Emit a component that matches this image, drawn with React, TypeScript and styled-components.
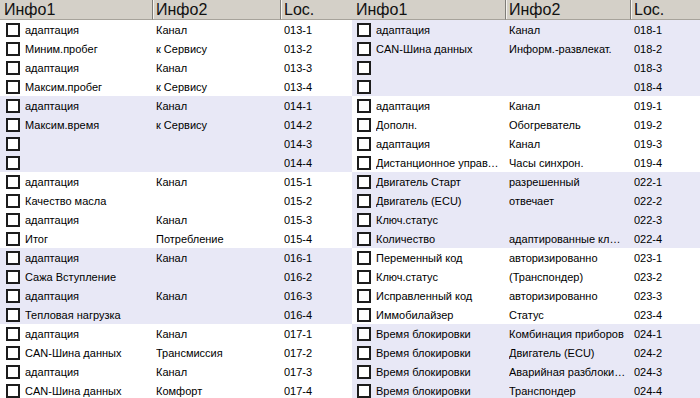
import React from 'react';
import styled, { createGlobalStyle } from 'styled-components';

const Global = createGlobalStyle`
  html, body { margin: 0; padding: 0; background: #fff; }
  body { font-family: "Liberation Sans", Arial, sans-serif; }
`;

type Row = { info1: string; info2: string; loc: string };

const group = (code: string, items: [string, string][]): Row[] =>
  items.map(([info1, info2], i) => ({ info1, info2, loc: `${code}-${i + 1}` }));

const LEFT: Row[][] = [
  group('013', [['адаптация', 'Канал'], ['Миним.пробег', 'к Сервису'], ['адаптация', 'Канал'], ['Максим.пробег', 'к Сервису']]),
  group('014', [['адаптация', 'Канал'], ['Максим.время', 'к Сервису'], ['', ''], ['', '']]),
  group('015', [['адаптация', 'Канал'], ['Качество масла', ''], ['адаптация', 'Канал'], ['Итог', 'Потребление']]),
  group('016', [['адаптация', 'Канал'], ['Сажа Вступление', ''], ['адаптация', 'Канал'], ['Тепловая нагрузка', '']]),
  group('017', [['адаптация', 'Канал'], ['CAN-Шина данных', 'Трансмиссия'], ['адаптация', 'Канал'], ['CAN-Шина данных', 'Комфорт']]),
];

const RIGHT: Row[][] = [
  group('018', [['адаптация', 'Канал'], ['CAN-Шина данных', 'Информ.-развлекат.'], ['', ''], ['', '']]),
  group('019', [['адаптация', 'Канал'], ['Дополн.', 'Обогреватель'], ['адаптация', 'Канал'], ['Дистанционное управление', 'Часы синхрон.']]),
  group('022', [['Двигатель Старт', 'разрешенный'], ['Двигатель (ECU)', 'отвечает'], ['Ключ.статус', ''], ['Количество', 'адаптированные ключи']]),
  group('023', [['Переменный код', 'авторизированно'], ['Ключ.статус', '(Транспондер)'], ['Исправленный код', 'авторизированно'], ['Иммобилайзер', 'Статус']]),
  group('024', [['Время блокировки', 'Комбинация приборов'], ['Время блокировки', 'Двигатель (ECU)'], ['Время блокировки', 'Аварийная разблокировка'], ['Время блокировки', 'Транспондер']]),
];

const Page = styled.div`
  display: flex;
  width: 700px;
  height: 398px;
  overflow: hidden;
`;

const Table = styled.div<{ $cols: string; $width: number }>`
  display: grid;
  grid-template-columns: ${({ $cols }) => $cols};
  grid-auto-rows: 19px;
  grid-template-rows: 20px;
  width: ${({ $width }) => $width}px;
  flex: none;
`;

const HeadCell = styled.div<{ $first?: boolean }>`
  background: #d4d0c8;
  border-bottom: 1px solid #a7a39b;
  border-left: ${({ $first }) => ($first ? 'none' : '1px solid #7f7d78')};
  box-shadow: ${({ $first }) => ($first ? 'none' : 'inset 1px 0 0 #f4f2ee')};
  padding-left: ${({ $first }) => ($first ? 4 : 3)}px;
  font-size: 16px;
  line-height: 19px;
  color: #111;
  white-space: nowrap;
  overflow: hidden;
`;

const Cell = styled.div<{ $shade: boolean; $pad: number }>`
  display: flex;
  align-items: center;
  gap: 5px;
  background: ${({ $shade }) => ($shade ? '#e8e8f6' : '#fff')};
  padding-left: ${({ $pad }) => $pad}px;
  font-size: 11px;
  color: #000;
  min-width: 0;
  overflow: hidden;
`;

const Text = styled.span`
  white-space: nowrap;
  overflow: hidden;
  text-overflow: ellipsis;
  min-width: 0;
  padding-right: 4px;
`;

const Box = styled.span`
  flex: none;
  width: 10px;
  height: 10px;
  border: 2px solid #1c1c1c;
  background: #fff;
`;

function DataTable({ groups, cols, width, shadeFirst }: { groups: Row[][]; cols: string; width: number; shadeFirst: boolean }) {
  return (
    <Table $cols={cols} $width={width}>
      <HeadCell $first>Инфо1</HeadCell>
      <HeadCell>Инфо2</HeadCell>
      <HeadCell>Loc.</HeadCell>
      {groups.map((g, gi) =>
        g.map((r) => {
          const shade = (gi % 2 === 1) !== shadeFirst;
          return (
            <React.Fragment key={r.loc}>
              <Cell $shade={shade} $pad={shadeFirst ? 5 : 6}>
                <Box />
                <Text>{r.info1}</Text>
              </Cell>
              <Cell $shade={shade} $pad={4}>
                <Text>{r.info2}</Text>
              </Cell>
              <Cell $shade={shade} $pad={4}>
                <Text>{r.loc}</Text>
              </Cell>
            </React.Fragment>
          );
        })
      )}
    </Table>
  );
}

export default function App() {
  return (
    <>
      <Global />
      <Page>
        <DataTable groups={LEFT} cols="152px 128px 72px" width={352} shadeFirst={false} />
        <DataTable groups={RIGHT} cols="153px 125px 70px" width={348} shadeFirst={true} />
      </Page>
    </>
  );
}
